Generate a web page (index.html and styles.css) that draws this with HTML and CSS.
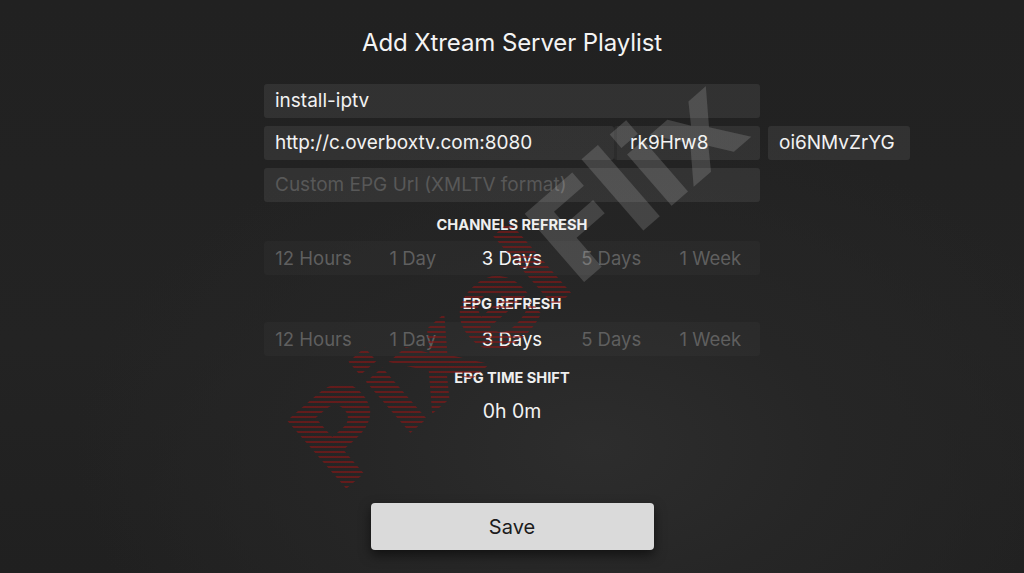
FILE: index.html
```html
<!DOCTYPE html>
<html>
<head>
<meta charset="utf-8">
<link rel="stylesheet" href="styles.css">
</head>
<body>
<div class="screen">
  <h1 class="title">Add Xtream Server Playlist</h1>
  <div class="form">
    <div class="field">install-iptv</div>
    <div class="row">
      <div class="field url">http://c.overboxtv.com:8080</div>
      <div class="field user">rk9Hrw8</div>
      <div class="field pass">oi6NMvZrYG</div>
    </div>
    <div class="field placeholder">Custom EPG Url (XMLTV format)</div>

    <div class="label first">CHANNELS REFRESH</div>
    <div class="segments">
      <span>12 Hours</span><span>1 Day</span><span class="active">3 Days</span><span>5 Days</span><span>1 Week</span>
    </div>

    <div class="label second">EPG REFRESH</div>
    <div class="segments">
      <span>12 Hours</span><span>1 Day</span><span class="active">3 Days</span><span>5 Days</span><span>1 Week</span>
    </div>

    <div class="label third">EPG TIME SHIFT</div>
    <div class="shift">0h 0m</div>
  </div>
  <button class="save">Save</button>

  <div class="watermark"><span class="wm-red">Pixel</span><span class="wm-gray">Flix</span></div>
</div>
</body>
</html>
```

FILE: styles.css
```css
* { box-sizing: border-box; }
html, body {
  margin: 0;
  padding: 0;
  width: 1024px;
  height: 573px;
  overflow: hidden;
}
body {
  font-family: Inter, "Liberation Sans", Arial, sans-serif;
  color: #f2f2f2;
  background: #202020;
}
.screen {
  position: relative;
  width: 1024px;
  height: 573px;
  display: flex;
  flex-direction: column;
  align-items: center;
  padding-top: 29px;
  padding-bottom: 23px;
  background:
    radial-gradient(ellipse 520px 330px at 58% 78%, #2d2d2d 0%, #262626 45%, rgba(34,34,34,0) 100%),
    linear-gradient(180deg, #212121 0%, #232323 60%, #202020 100%);
  overflow: hidden;
}
.title {
  margin: 0;
  font-size: 24px;
  line-height: 28px;
  font-weight: 400;
  letter-spacing: -0.1px;
  color: #f4f4f4;
}
.form {
  width: 496px;
  margin-top: 27px;
  display: flex;
  flex-direction: column;
}
.field {
  height: 34px;
  line-height: 34px;
  padding-left: 11px;
  font-size: 19px;
  background: rgba(255,255,255,0.075);
  border-radius: 3px;
  color: #f2f2f2;
  white-space: nowrap;
}
.row {
  display: flex;
  width: 646px;
  margin: 8px 0;
}
.row .url { width: 350px; }
.row .user { width: 146px; padding-left: 13px; border-left: 3px solid rgba(0,0,0,0.12); }
.row .pass { width: 142px; margin-left: 8px; padding-left: 11px; }
.placeholder { color: #585858; }

.label {
  text-align: center;
  font-size: 14.6px;
  line-height: 16px;
  font-weight: 700;
  letter-spacing: 0;
  color: #efefef;
}
.label.first { margin-top: 15px; }
.label.second { margin-top: 21px; }
.label.third { margin-top: 14px; }

.segments {
  display: grid;
  grid-template-columns: repeat(5, 1fr);
  height: 34px;
  margin-top: 8px;
  background: rgba(255,255,255,0.022);
  border-radius: 3px;
}
.label.second + .segments { margin-top: 10px; }
.segments span {
  text-align: center;
  font-size: 18.5px;
  line-height: 34px;
  color: #5f5f5f;
}
.segments span.active { color: #f5f5f5; }

.shift {
  text-align: center;
  margin-top: 14px;
  font-size: 19.5px;
  line-height: 22px;
  color: #f2f2f2;
}

.save {
  margin-top: auto;
  width: 283px;
  height: 47px;
  border: none;
  border-radius: 4px;
  background: #dadada;
  color: #1c1c1c;
  font-family: Inter, "Liberation Sans", Arial, sans-serif;
  font-size: 20px;
  box-shadow: 0 5px 12px rgba(0,0,0,0.55);
}

.watermark {
  position: absolute;
  left: 515px;
  top: 285px;
  transform: translate(-50%, -50%) rotate(-41deg);
  font-family: "DejaVu Sans", sans-serif;
  font-weight: bold;
  font-size: 124px;
  line-height: 1;
  letter-spacing: -5px;
  white-space: nowrap;
  pointer-events: none;
}
.wm-red {
  color: transparent;
  background: repeating-linear-gradient(41deg, rgba(140,22,22,0.6) 0 2px, rgba(140,22,22,0) 2px 5px);
  -webkit-background-clip: text;
  background-clip: text;
}
.wm-gray {
  color: rgba(255,255,255,0.15);
}
```
